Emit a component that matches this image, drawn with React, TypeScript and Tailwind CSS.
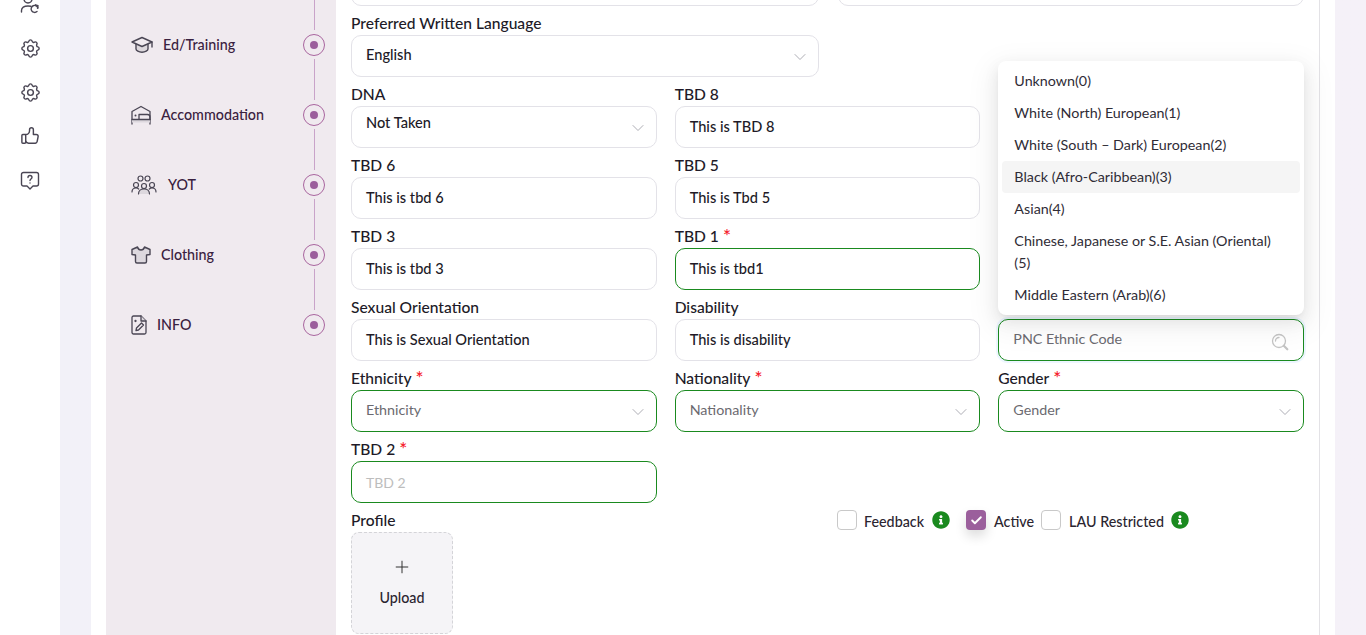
import React from 'react';
import { FaInfoCircle } from 'react-icons/fa';
import { TbSettings, TbThumbUp } from 'react-icons/tb';
import { ChevronDown, Plus, Check } from 'lucide-react';

const ETHNIC_CODES = [
  'Unknown(0)',
  'White (North) European(1)',
  'White (South – Dark) European(2)',
  'Black (Afro-Caribbean)(3)',
  'Asian(4)',
  'Chinese, Japanese or S.E. Asian (Oriental)\n(5)',
  'Middle Eastern (Arab)(6)',
];

function CapIcon() {
  return (
    <svg width="22" height="18" viewBox="0 0 22 18" fill="none" stroke="#4a4654" strokeWidth="1.4" strokeLinejoin="round" strokeLinecap="round">
      <path d="M5 7.500v5.500c0 1.600 2.700 3.200 6 3.200s6-1.600 6-3.200V7.500" fill="#dcd7dc" />
      <path d="M11 1.500 1 6l10 4.500L21 6z" fill="#f0eaef" />
      <path d="M21 6v5" />
    </svg>
  );
}

function BedIcon() {
  return (
    <svg width="20" height="20" viewBox="0 0 20 20" fill="none" stroke="#4a4654" strokeWidth="1.300" strokeLinejoin="round" strokeLinecap="round">
      <path d="M1 19V6.500L10 1.500l9 5V19" />
      <path d="M1 14.500h18V17.500H1z" fill="#ddd8de" stroke="none" />
      <path d="M1 14.500h18" />
      <path d="M8 14V9.500h8.500c1.500 0 2.500 1 2.500 2.500v2.500" />
      <circle cx="4.500" cy="10.500" r="1" fill="#4a4654" stroke="none" />
    </svg>
  );
}

function GroupIcon() {
  return (
    <svg width="26" height="20" viewBox="0 0 26 20" fill="none" stroke="#4a4654" strokeWidth="1.200" strokeLinecap="round">
      <circle cx="9.500" cy="3.500" r="2.500" />
      <circle cx="16.500" cy="3.500" r="2.500" />
      <circle cx="5" cy="10" r="2.500" />
      <circle cx="13" cy="11" r="2.500" />
      <circle cx="21" cy="10" r="2.500" />
      <path d="M7 19c0-3 2.500-5 6-5s6 2 6 5z" fill="#ddd8de" stroke="none" />
      <path d="M1 17c0-2.500 1.500-4 4-4 1 0 2 .3 2.700 1M25 17c0-2.500-1.500-4-4-4-1 0-2 .3-2.700 1M7.500 19c0-3 2.200-5 5.500-5s5.500 2 5.500 5" />
    </svg>
  );
}

function ShirtIcon() {
  return (
    <svg width="20" height="18" viewBox="0 0 20 18" fill="#ddd8de" stroke="#4a4654" strokeWidth="1.400" strokeLinejoin="round">
      <path d="M6.500 1 1 3.500v5l3.500.5v6.500c0 .8.500 1.500 1.500 1.500h8c1 0 1.500-.7 1.500-1.500V9l3.500-.5v-5L13.500 1c-.5 2-1.800 3-3.500 3S7 3 6.500 1z" />
    </svg>
  );
}

function NoteIcon() {
  return (
    <svg width="16" height="20" viewBox="0 0 16 20" fill="none" stroke="#4a4654" strokeWidth="1.300" strokeLinejoin="round" strokeLinecap="round">
      <path d="M2.500 1H10l5 5v11.500c0 .8-.7 1.500-1.500 1.500h-11C1.700 19 1 18.300 1 17.500v-15C1 1.700 1.700 1 2.500 1z" />
      <path d="M10 1v5h5" fill="#ddd8de" />
      <path d="m5 15.500.5-2.500 5-5 2 2-5 5z" />
      <circle cx="4.500" cy="6" r=".5" fill="#4a4654" />
    </svg>
  );
}

function UserIcon() {
  return (
    <svg width="20" height="20" viewBox="0 0 20 20" fill="none" stroke="#4a4654" strokeWidth="1.400" strokeLinecap="round" strokeLinejoin="round">
      <circle cx="8" cy="3" r="4" />
      <path d="M1.500 16v-1.500C1.500 11.500 4 10 8 10c1 0 2 .1 2.800.3" />
      <path d="M18 12a3.500 3.500 0 1 0-1 3.500" />
      <path d="m15.500 8.800 2.500.8-.5 2.600" />
    </svg>
  );
}

function HelpIcon() {
  return (
    <svg width="20" height="20" viewBox="0 0 20 20" fill="none" stroke="#4a4654" strokeWidth="1.400" strokeLinecap="round" strokeLinejoin="round">
      <path d="M3.500 1.500h13c1.200 0 2 .8 2 2V13c0 1.200-.8 2-2 2h-3.500L10 18l-3-3H3.500c-1.200 0-2-.8-2-2V3.500c0-1.200.8-2 2-2z" />
      <path d="M8 6.500C8 5.200 8.900 4.500 10 4.500s2 .8 2 1.800c0 1.700-2 1.600-2 3.200" />
      <path d="M10 12v.1" />
    </svg>
  );
}

function SearchIcon() {
  return (
    <svg width="18" height="18" viewBox="0 0 18 18" fill="none" stroke="#c4c4c4" strokeWidth="1.300" strokeLinecap="round">
      <circle cx="8" cy="8" r="6.500" />
      <path d="M4.500 8A3.500 3.500 0 0 1 8 4.500" />
      <path d="m12.800 12.800 3.500 3.500" strokeWidth="2.200" />
    </svg>
  );
}

function StepRow({ icon, label, gap, last }: { icon: React.ReactNode; label: string; gap: string; last?: boolean }) {
  return (
    <div className="flex h-[70px] items-center justify-between pl-[25px] pr-[11px]">
      <div className={`flex items-center ${gap} text-[14.300px] font-medium text-[#3a2140]`}>
        {icon}
        <span>{label}</span>
      </div>
      <div className="flex h-full w-[22px] flex-col items-center">
        <div className="h-[20px] w-px bg-[#c9a3c9]" />
        <div className="mt-[4px] flex h-[22px] w-[22px] items-center justify-center rounded-full border border-[#a9659f]">
          <div className="h-[8px] w-[8px] rounded-full bg-[#9b5f9c]" />
        </div>
        {!last && <div className="mt-[3px] w-px flex-1 bg-[#c9a3c9]" />}
      </div>
    </div>
  );
}

function FieldLabel({ text, required }: { text: string; required?: boolean }) {
  return (
    <div className="flex h-[29px] items-end pb-[1px] text-[15.600px] font-medium leading-[22px] text-[#211a27]">
      {text}
      {required && <span className="ml-[4px] text-[19px] text-[#f5222d]">*</span>}
    </div>
  );
}

function TextBox({ value, placeholder, green }: { value?: string; placeholder?: string; green?: boolean }) {
  return (
    <div className={`flex h-[42px] items-center rounded-[10px] border bg-white px-[14px] ${green ? 'border-[#1a8a1f]' : 'border-[#e3e2e8]'} ${value ? 'text-[14.600px] font-medium text-[#211a27]' : 'text-[14px] text-[#bdbdbd]'}`}>
      {value || placeholder}
    </div>
  );
}

function SelectBox({ value, placeholder, green, lift }: { value?: string; placeholder?: string; green?: boolean; lift?: string }) {
  return (
    <div className={`flex h-[42px] items-center justify-between rounded-[10px] border bg-white pl-[14px] pr-[8px] ${green ? 'border-[#1a8a1f]' : 'border-[#e3e2e8]'} ${value ? 'text-[14.600px] font-medium text-[#211a27]' : 'text-[14.300px] text-[#6b6a70]'}`}>
      <span className={lift}>{value || placeholder}</span>
      <ChevronDown size={20} strokeWidth={1.100} className="mt-[2px] text-[#a5a5ad]" />
    </div>
  );
}

function Tick({ checked, label, tight }: { checked?: boolean; label: string; tight?: boolean }) {
  return (
    <div className={`flex h-[20px] items-center ${tight ? 'gap-[7px]' : 'gap-[8px]'}`}>
      {checked ? (
        <div className="flex h-[20px] w-[20px] items-center justify-center rounded-[4px] bg-[#9b5f9c] shadow-[0_6px_12px_rgba(0,0,0,0.14)]">
          <Check size={13} strokeWidth={3.500} className="text-white" />
        </div>
      ) : (
        <div className="h-[20px] w-[20px] rounded-[4px] border border-[#c9c9c9] bg-white" />
      )}
      <span className="mt-[4px] text-[14.300px] font-medium text-[#2b2530]">{label}</span>
    </div>
  );
}

export default function App() {
  return (
    <div className="flex h-[635px] overflow-hidden bg-white font-['Lato','Noto_Sans',sans-serif]">
      <aside className="flex w-[60px] shrink-0 flex-col items-center">
        <div className="-mt-[4px] flex flex-col items-center">
          <div className="flex h-[20px] items-end"><UserIcon /></div>
          <div className="mt-[21px] text-[#4a4654]"><TbSettings size={23} strokeWidth={1.500} /></div>
          <div className="mt-[21px] text-[#4a4654]"><TbSettings size={23} strokeWidth={1.500} /></div>
          <div className="mt-[20px] text-[#4a4654]"><TbThumbUp size={23} strokeWidth={1.500} /></div>
          <div className="mt-[24px]"><HelpIcon /></div>
        </div>
      </aside>

      <main className="flex-1 bg-gradient-to-r from-[#f2f1f8] to-[#f5f1f8] px-[31px]">
        <div className="h-full bg-white px-[15px]">
          <div className="flex h-full border-r border-[#e3e2e6]">
            <div className="w-[230px] shrink-0 bg-[#f0eaef]">
              <div className="flex h-[10px] justify-end pr-[21.500px]"><div className="w-px bg-[#c9a3c9]" /></div>
              <StepRow icon={<CapIcon />} label="Ed/Training" gap="gap-[10px]" />
              <StepRow icon={<BedIcon />} label="Accommodation" gap="gap-[10px]" />
              <StepRow icon={<GroupIcon />} label="YOT" gap="gap-[11px]" />
              <StepRow icon={<ShirtIcon />} label="Clothing" gap="gap-[10px]" />
              <StepRow icon={<NoteIcon />} label="INFO" gap="gap-[10px]" last />
            </div>

            <div className="ml-[15px] -mt-[36px] w-[953px]">
              <div className="grid grid-cols-[468px_1fr] gap-x-[19px]">
                <TextBox value=" " />
                <TextBox value=" " />
              </div>
              <div className="grid grid-cols-[468px_1fr] gap-x-[19px]">
                <div>
                  <FieldLabel text="Preferred Written Language" />
                  <SelectBox value="English" lift="-mt-[2px]" />
                </div>
              </div>
              <div className="grid grid-cols-3 gap-x-[18px]">
                <div>
                  <FieldLabel text="DNA" />
                  <SelectBox value="Not Taken" lift="-mt-[8px]" />
                </div>
                <div>
                  <FieldLabel text="TBD 8" />
                  <TextBox value="This is TBD 8" />
                </div>
                <div />
                <div>
                  <FieldLabel text="TBD 6" />
                  <TextBox value="This is tbd 6" />
                </div>
                <div>
                  <FieldLabel text="TBD 5" />
                  <TextBox value="This is Tbd 5" />
                </div>
                <div />
                <div>
                  <FieldLabel text="TBD 3" />
                  <TextBox value="This is tbd 3" />
                </div>
                <div>
                  <FieldLabel text="TBD 1" required />
                  <TextBox value="This is tbd1" green />
                </div>
                <div />
                <div>
                  <FieldLabel text="Sexual Orientation" />
                  <TextBox value="This is Sexual Orientation" />
                </div>
                <div>
                  <FieldLabel text="Disability" />
                  <TextBox value="This is disability" />
                </div>
                <div className="relative">
                  <div className="h-[29px]" />
                  <div className="flex h-[42px] items-center justify-between rounded-[10px] border border-[#1a8a1f] bg-white px-[14px] text-[14.300px] text-[#6b6a70] shadow-[0_0_0_2px_rgba(24,144,255,0.08)]">
                    <span className="-mt-[2px]">PNC Ethnic Code</span>
                    <span className="mt-[4px]"><SearchIcon /></span>
                  </div>
                  <div className="absolute bottom-[46px] left-0 right-0 z-10 rounded-[8px] bg-white p-[4px] text-[14.300px] text-[#2f2c36] shadow-[0_6px_16px_rgba(0,0,0,0.08),0_3px_6px_-4px_rgba(0,0,0,0.12),0_9px_28px_8px_rgba(0,0,0,0.05)]">
                    {ETHNIC_CODES.map((code, i) => (
                      <div key={code} className={`whitespace-pre-line rounded-[4px] px-[12px] py-[5px] leading-[22px] ${i === 3 ? 'bg-[#f5f5f5]' : ''}`}>
                        {code}
                      </div>
                    ))}
                  </div>
                </div>
                <div>
                  <FieldLabel text="Ethnicity" required />
                  <SelectBox placeholder="Ethnicity" green lift="-mt-[2px]" />
                </div>
                <div>
                  <FieldLabel text="Nationality" required />
                  <SelectBox placeholder="Nationality" green lift="-mt-[2px]" />
                </div>
                <div>
                  <FieldLabel text="Gender" required />
                  <SelectBox placeholder="Gender" green lift="-mt-[2px]" />
                </div>
                <div>
                  <FieldLabel text="TBD 2" required />
                  <TextBox placeholder="TBD 2" green />
                </div>
              </div>

              <div className="flex">
                <div className="w-[486px]">
                  <FieldLabel text="Profile" />
                  <div className="flex h-[102px] w-[102px] flex-col items-center justify-center rounded-[8px] border border-dashed border-[#d4d4d8] bg-[#f5f4f7] pb-[2px]">
                    <Plus size={20} strokeWidth={1.200} className="text-[#333]" />
                    <span className="mt-[10px] text-[14.300px] font-medium leading-[21px] text-[#2b2530]">Upload</span>
                  </div>
                </div>
                <div className="flex h-fit items-center pt-[7px]">
                  <Tick label="Feedback" tight />
                  <FaInfoCircle size={18} className="ml-[8px] text-[#1a8a1f]" />
                  <div className="ml-[16px]"><Tick checked label="Active" /></div>
                  <div className="ml-[7px]"><Tick label="LAU Restricted" /></div>
                  <FaInfoCircle size={18} className="ml-[7px] text-[#1a8a1f]" />
                </div>
              </div>
            </div>
          </div>
        </div>
      </main>
    </div>
  );
}
